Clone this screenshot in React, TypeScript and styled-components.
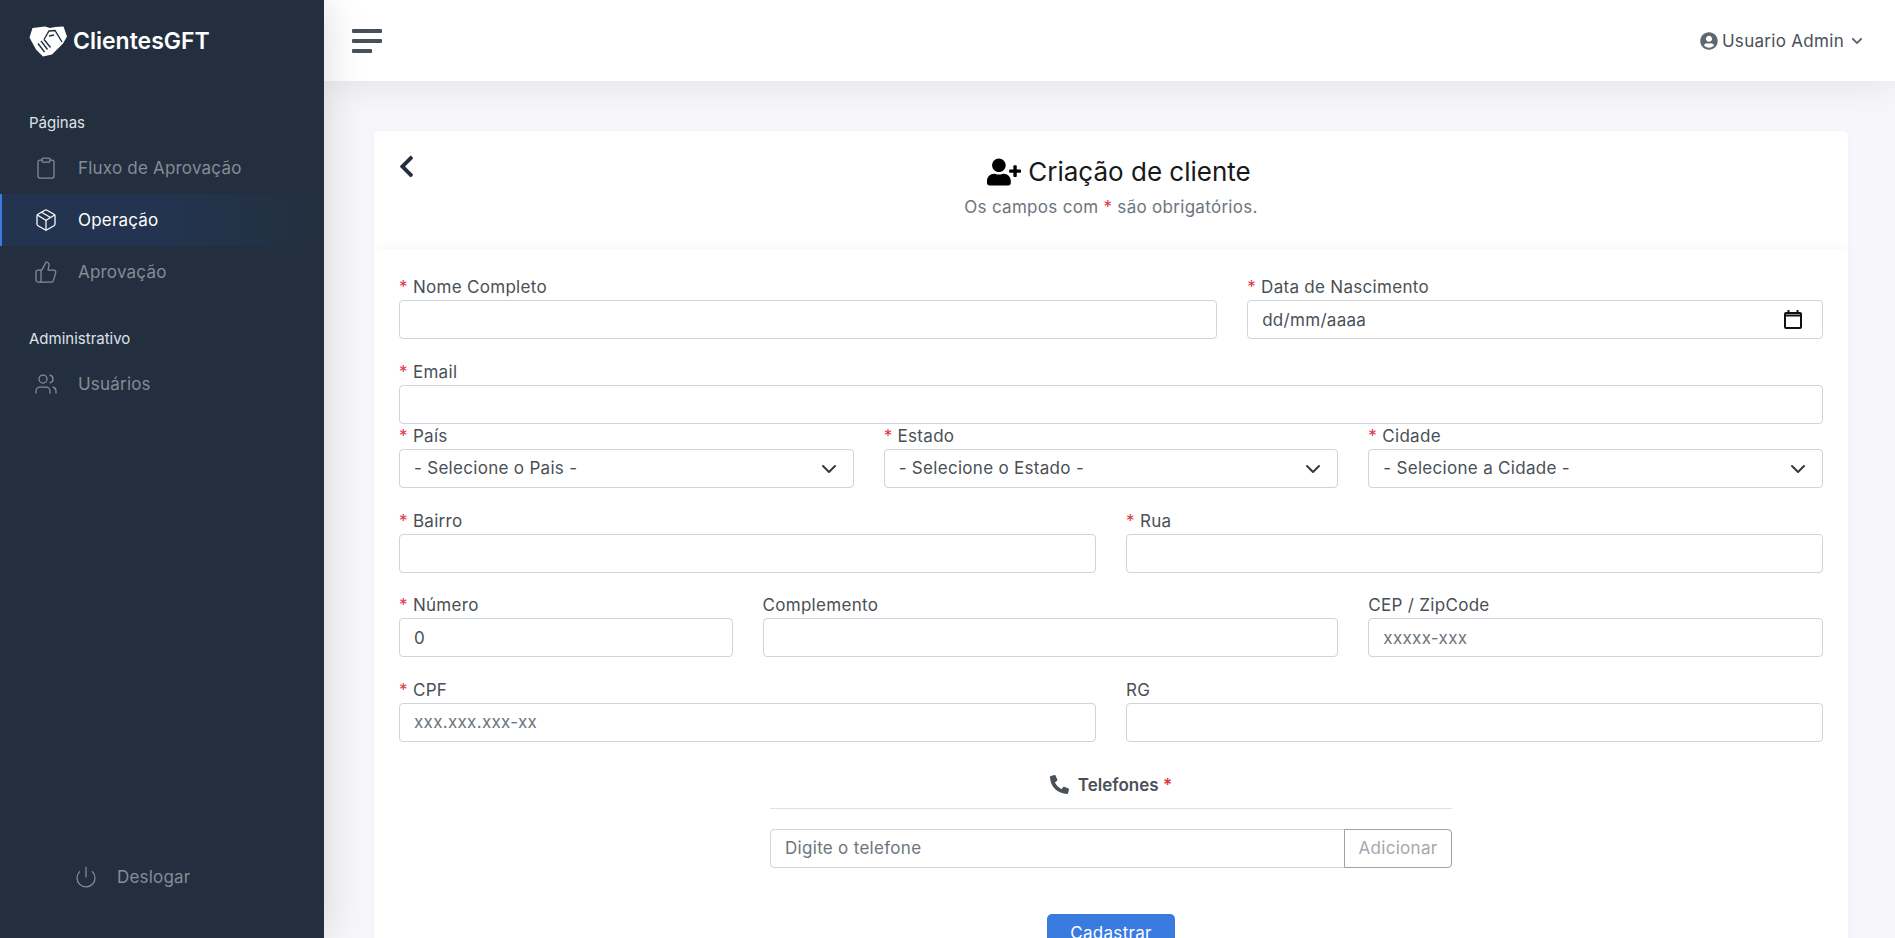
import React from 'react'
import styled, { createGlobalStyle } from 'styled-components'
import { FaChevronLeft, FaUserPlus, FaUserCircle, FaChevronDown, FaPhoneAlt } from 'react-icons/fa'
import { LuClipboard, LuPackage, LuThumbsUp, LuUsers, LuPower } from 'react-icons/lu'

const GlobalStyle = createGlobalStyle`
  * { box-sizing: border-box; }
  html, body { margin: 0; height: 100%; overflow: hidden; }
  body { font-family: Inter, "Noto Sans", sans-serif; font-size: 17px; letter-spacing: 0.3px; color: #495057; }
`

const Shell = styled.div`
  display: flex;
  height: 100vh;
  background: #f6f6fb;
`

const Sidebar = styled.aside`
  width: 324px;
  flex-shrink: 0;
  display: flex;
  flex-direction: column;
  background: #232f3e;
  box-shadow: 0 0 40px rgba(0, 0, 0, 0.15);
  z-index: 2;
`

const Brand = styled.div`
  height: 81px;
  padding-left: 29px;
  display: flex;
  align-items: center;
  gap: 6px;
  color: #fff;
  font-size: 23px;
  font-weight: 600;
  letter-spacing: 0;
  svg { margin-top: 2px; }
  span { margin-top: 1px; }
`

const SectionTitle = styled.div<{ $second?: boolean }>`
  margin: ${p => (p.$second ? '29px' : '30px')} 0 7px 29px;
  height: 24px;
  line-height: 24px;
  font-size: 15px;
  letter-spacing: 0;
  color: #dfe3e8;
`

const NavItem = styled.div<{ $active?: boolean }>`
  height: 52px;
  display: flex;
  align-items: center;
  gap: 20px;
  padding-left: 32px;
  letter-spacing: 0.2px;
  color: ${p => (p.$active ? '#fff' : '#858c96')};
  border-left: 2px solid ${p => (p.$active ? '#3a7bdf' : 'transparent')};
  background: ${p => (p.$active ? 'linear-gradient(90deg, #22344f 0%, #22344f 50%, #232f3e 100%)' : 'transparent')};
  svg { font-size: 24px; stroke-width: 1.25; flex-shrink: 0; }
`

const Logout = styled.div`
  margin-top: auto;
  margin-bottom: 49px;
  padding-left: 74px;
  display: flex;
  align-items: center;
  gap: 19px;
  letter-spacing: 0.2px;
  color: #858c96;
  svg { font-size: 24px; stroke-width: 1.25; }
`

const Content = styled.div`
  flex: 1;
  min-width: 0;
  display: flex;
  flex-direction: column;
`

const Topbar = styled.header`
  height: 81px;
  flex-shrink: 0;
  display: flex;
  align-items: center;
  justify-content: space-between;
  padding: 0 32px 0 28px;
  background: #fff;
  box-shadow: 0 0 40px rgba(0, 0, 0, 0.1);
  z-index: 1;
`

const Burger = styled.div`
  width: 30px;
  display: flex;
  flex-direction: column;
  gap: 6px;
`

const BurgerBar = styled.span<{ $short?: boolean }>`
  display: block;
  height: 4px;
  width: ${p => (p.$short ? '20px' : '30px')};
  border-radius: 1px;
  background: #495057;
`

const UserMenu = styled.div`
  display: flex;
  align-items: center;
  gap: 4px;
  color: #495057;
  svg:first-child { font-size: 18px; color: #5f6770; }
  svg:last-child { font-size: 12px; margin-left: 3px; color: #5f6770; }
`

const Page = styled.main`
  flex: 1;
  padding: 50px 47px 0 50px;
`

const HeadCard = styled.section`
  height: 124px;
  padding: 23px 25px 0;
  background: #fff;
  border-radius: 5px 5px 0 0;
  box-shadow: 0 0 10px rgba(0, 0, 0, 0.02);
`

const BackRow = styled.div`
  height: 0;
  margin-left: -5px;
  color: #232f3e;
  svg { display: block; font-size: 25px; }
`

const Title = styled.h1`
  margin: 0;
  padding-left: 16px;
  display: flex;
  justify-content: center;
  align-items: center;
  gap: 7px;
  font-size: 26px;
  font-weight: 400;
  line-height: 36px;
  letter-spacing: 0;
  color: #16191c;
  svg { font-size: 34px; color: #000; }
`

const Subtitle = styled.p`
  margin: 5px 0 0;
  text-align: center;
  line-height: 24px;
  color: #6c757d;
`

const Required = styled.span`
  color: #dc3545;
`

const FormCard = styled.section`
  margin-top: -6px;
  padding: 27px 25px 0;
  background: #fff;
  border-radius: 5px;
  box-shadow: 0 -2px 10px rgba(0, 0, 0, 0.03);
  position: relative;
`

const Row = styled.div<{ $tight?: boolean }>`
  display: grid;
  grid-template-columns: repeat(12, 1fr);
  column-gap: 30px;
  margin-bottom: ${p => (p.$tight ? '1.4px' : '21.6px')};
`

const Field = styled.div<{ $span: number }>`
  grid-column: span ${p => p.$span};
  display: flex;
  flex-direction: column;
`

const Label = styled.label`
  line-height: 22px;
  padding-bottom: 2px;
  color: #495057;
`

const Input = styled.input`
  width: 100%;
  height: 39px;
  padding: 0 14px;
  border: 1px solid #ced4da;
  border-radius: 4px;
  background: #fff;
  font: inherit;
  letter-spacing: inherit;
  color: #495057;
  outline: none;
  &::placeholder { color: #6c757d; opacity: 1; }
`

const DateBox = styled.div`
  height: 39px;
  padding: 0 20px 0 14px;
  display: flex;
  align-items: center;
  justify-content: space-between;
  border: 1px solid #ced4da;
  border-radius: 4px;
  color: #495057;
`

const SelectWrap = styled.div`
  position: relative;
  svg {
    position: absolute;
    right: 17px;
    top: 12px;
    pointer-events: none;
  }
`

const Select = styled.select`
  width: 100%;
  height: 39px;
  padding: 0 14px;
  appearance: none;
  border: 1px solid #ced4da;
  border-radius: 4px;
  background: #fff;
  font: inherit;
  letter-spacing: inherit;
  color: #495057;
`

const PhoneBlock = styled.div`
  width: 682px;
  margin: 31px auto 0;
`

const PhoneTitle = styled.h5`
  margin: 0;
  padding-bottom: 11px;
  display: flex;
  align-items: center;
  justify-content: center;
  gap: 9px;
  border-bottom: 1px solid #dee2e6;
  font-size: 17px;
  font-weight: 600;
  line-height: 24px;
  letter-spacing: 0;
  color: #495057;
  svg { font-size: 19px; }
`

const PhoneGroup = styled.div`
  display: flex;
  margin-top: 20px;
`

const PhoneInput = styled(Input)`
  flex: 1;
  border-radius: 4px 0 0 4px;
`

const AddButton = styled.button`
  width: 108px;
  height: 39px;
  margin-left: -1px;
  padding: 0;
  border: 1px solid #9aa1a9;
  border-radius: 0 4px 4px 0;
  background: #fff;
  font: inherit;
  letter-spacing: inherit;
  color: #a3a8ae;
`

const Submit = styled.div`
  display: flex;
  justify-content: center;
  margin-top: 46px;
`

const SubmitButton = styled.button`
  height: 38px;
  padding: 0 23px;
  border: none;
  border-radius: 5px;
  background: #3a7bdf;
  color: #fff;
  font: inherit;
  letter-spacing: inherit;
`

const HandshakeLogo = () => (
  <svg width="38" height="31" viewBox="29 26.5 38 31">
    <path fill="#fff" d="M32.5 28.5 L45 27 L50 28.5 L55 27.5 L63.5 27 L67 37 L63 44 L52 55 L43 57 L36 50 L29.5 38 Z" />
    <path fill="none" stroke="#232f3e" strokeWidth="1.4" d="M44 40 L49 31.5 L55 31 L62 42.5 M49 36.5 L54 35.5 M38 44 L44.5 52.5 M41 41.5 L47.5 50 M44 40 L50.5 48" />
  </svg>
)

const CalendarIcon = () => (
  <svg width="18" height="19" viewBox="0 0 18 19" fill="none" stroke="#111" strokeWidth="2">
    <rect x="1" y="3" width="16" height="15" rx="1" />
    <path d="M4.5 0v3M13.5 0v3M1 5.5h16" />
  </svg>
)

const SelectChevron = () => (
  <svg width="16" height="16" viewBox="0 0 16 16" fill="none" stroke="#343a40" strokeWidth="2" strokeLinecap="round" strokeLinejoin="round">
    <path d="M2 5l6 6 6-6" />
  </svg>
)

const Req = () => <Required>*</Required>

const SelectField = ({ label, option }: { label: string; option: string }) => (
  <Field $span={4}>
    <Label><Req /> {label}</Label>
    <SelectWrap>
      <Select defaultValue="">
        <option value="">{option}</option>
      </Select>
      <SelectChevron />
    </SelectWrap>
  </Field>
)

const App = () => {
  return (
    <Shell>
      <GlobalStyle />
      <Sidebar>
        <Brand><HandshakeLogo /><span>ClientesGFT</span></Brand>
        <SectionTitle>Páginas</SectionTitle>
        <NavItem><LuClipboard />Fluxo de Aprovação</NavItem>
        <NavItem $active><LuPackage />Operação</NavItem>
        <NavItem><LuThumbsUp />Aprovação</NavItem>
        <SectionTitle $second>Administrativo</SectionTitle>
        <NavItem><LuUsers />Usuários</NavItem>
        <Logout><LuPower />Deslogar</Logout>
      </Sidebar>
      <Content>
        <Topbar>
          <Burger>
            <BurgerBar />
            <BurgerBar />
            <BurgerBar $short />
          </Burger>
          <UserMenu><FaUserCircle />Usuario Admin<FaChevronDown /></UserMenu>
        </Topbar>
        <Page>
          <HeadCard>
            <BackRow><FaChevronLeft /></BackRow>
            <Title><FaUserPlus />Criação de cliente</Title>
            <Subtitle>Os campos com <Req /> são obrigatórios.</Subtitle>
          </HeadCard>
          <FormCard>
            <Row>
              <Field $span={7}>
                <Label><Req /> Nome Completo</Label>
                <Input />
              </Field>
              <Field $span={5}>
                <Label><Req /> Data de Nascimento</Label>
                <DateBox>dd/mm/aaaa<CalendarIcon /></DateBox>
              </Field>
            </Row>
            <Row $tight>
              <Field $span={12}>
                <Label><Req /> Email</Label>
                <Input />
              </Field>
            </Row>
            <Row>
              <SelectField label="País" option="- Selecione o Pais -" />
              <SelectField label="Estado" option="- Selecione o Estado -" />
              <SelectField label="Cidade" option="- Selecione a Cidade -" />
            </Row>
            <Row>
              <Field $span={6}>
                <Label><Req /> Bairro</Label>
                <Input />
              </Field>
              <Field $span={6}>
                <Label><Req /> Rua</Label>
                <Input />
              </Field>
            </Row>
            <Row>
              <Field $span={3}>
                <Label><Req /> Número</Label>
                <Input defaultValue="0" />
              </Field>
              <Field $span={5}>
                <Label>Complemento</Label>
                <Input />
              </Field>
              <Field $span={4}>
                <Label>CEP / ZipCode</Label>
                <Input placeholder="xxxxx-xxx" />
              </Field>
            </Row>
            <Row>
              <Field $span={6}>
                <Label><Req /> CPF</Label>
                <Input placeholder="xxx.xxx.xxx-xx" />
              </Field>
              <Field $span={6}>
                <Label>RG</Label>
                <Input />
              </Field>
            </Row>
            <PhoneBlock>
              <PhoneTitle><FaPhoneAlt /><span>Telefones <Req /></span></PhoneTitle>
              <PhoneGroup>
                <PhoneInput placeholder="Digite o telefone" />
                <AddButton>Adicionar</AddButton>
              </PhoneGroup>
              <Submit><SubmitButton>Cadastrar</SubmitButton></Submit>
            </PhoneBlock>
          </FormCard>
        </Page>
      </Content>
    </Shell>
  )
}

export default App
